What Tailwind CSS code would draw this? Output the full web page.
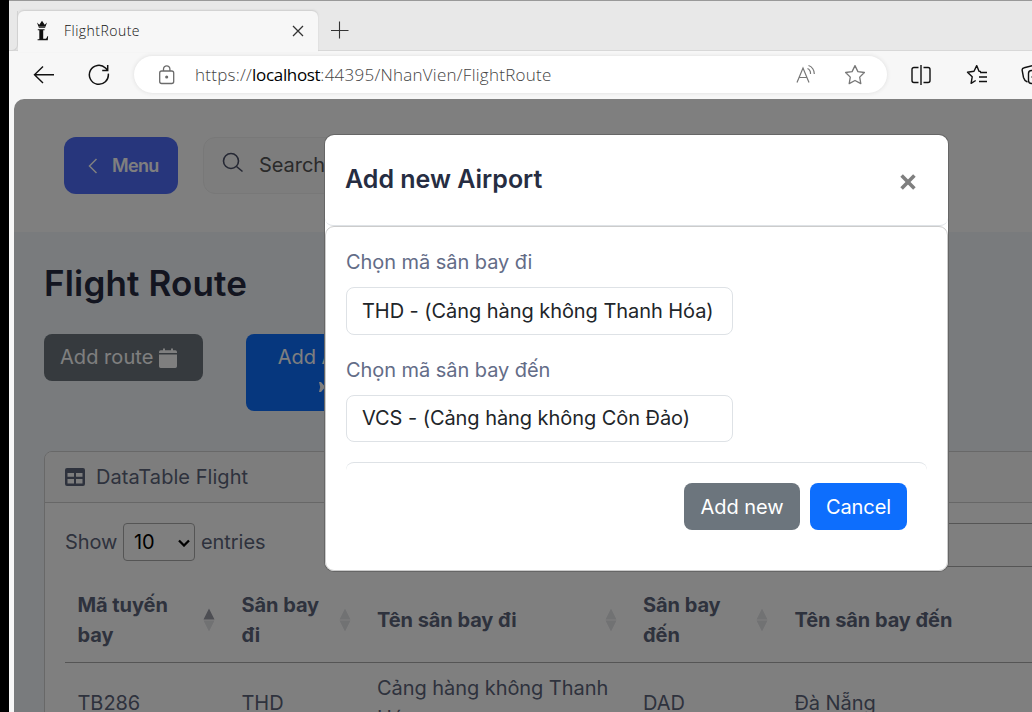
<!DOCTYPE html>
<html lang="vi">
<head>
<meta charset="utf-8">
<title>FlightRoute</title>
<script src="https://cdn.jsdelivr.net/npm/@tailwindcss/browser@4"></script>
</head>
<body class="w-[1032px] h-[712px] overflow-hidden bg-black pl-[9px] font-['Inter',sans-serif]">
<div class="relative flex h-[712px] w-[1023px] flex-col overflow-hidden bg-[#f7f7f7]">

  <!-- Tab strip -->
  <div class="flex h-[51px] shrink-0 border-t border-[#999] bg-[#e8e8e8] pt-[10px] font-['Open_Sans',sans-serif] shadow-[inset_0_-1px_0_#d8d8d8]">
    <div class="h-[40px] w-[9px] rounded-br-[6px] border-r border-b border-[#d3d3d3]"></div>
    <div class="flex h-[41px] w-[300px] items-center rounded-t-[6px] bg-[#f7f7f7] pb-[2px] shadow-[0_-1px_2px_#ccc]">
      <svg class="ml-[17px] h-[22px] w-[14px]" viewBox="0 0 14 22"><path d="M2 2.500l2.300 2.200L7 .8l2.700 3.900L12 2.500l-1.500 4.200H3.500z" fill="#111"/><path d="M3.800 7.300h6.400v.8H3.800zM2.800 9.200h6.800v1H8.200v8.600h1.500c1.600 0 2.200-1 2.600-2.600h.8l-.3 4H2.600v-1h1.700v-9H2.800z" fill="#111"/></svg>
      <span class="ml-[15px] text-[14px] leading-5 font-light tracking-[0.48px] text-[#111]">FlightRoute</span>
      <svg class="mr-[14px] ml-auto h-[12px] w-[12px]" viewBox="0 0 12 12"><path d="M1 1l10 10M11 1L1 11" stroke="#333" stroke-width="1.3"/></svg>
    </div>
    <svg class="mt-[10px] ml-[13px] h-[18px] w-[18px]" viewBox="0 0 18 18"><path d="M8.500 .5v17M0 9.500h17.500" stroke="#333" stroke-width="1.1"/></svg>
  </div>

  <!-- Toolbar -->
  <div class="flex h-[48px] shrink-0 items-center font-['Open_Sans',sans-serif]">
    <svg class="ml-[24px] h-[22px] w-[22px] shrink-0" viewBox="0 0 22 22" fill="none" stroke="#111" stroke-width="1.4"><path d="M10 2.500L1.500 10.700 10 19M1.500 10.700H21"/></svg>
    <svg class="ml-[33px] h-[22px] w-[22px] shrink-0" viewBox="0 0 22 22" fill="none" stroke="#111" stroke-width="1.500"><path d="M20.300 9.700A9.500 9.500 0 1 1 17.500 4L19.500 6M19.700 1v5.500h-5.500"/></svg>
    <div class="mb-px ml-[24px] flex h-[37px] w-[753px] shrink-0 items-center rounded-full bg-white shadow-[0_0_4px_#ddd]">
      <svg class="ml-[24px] h-[20px] w-[18px] shrink-0" viewBox="0 0 18 20" fill="none" stroke="#6b6b6b" stroke-width="1.300"><rect x="1.700" y="6" width="14" height="12.500" rx="2"/><path d="M5.500 6V4a3.200 3.200 0 0 1 6.400 0v2"/><circle cx="8.700" cy="12" r=".9" fill="#6b6b6b"/></svg>
      <span class="ml-[19px] w-[370px] shrink-0 text-[17px] leading-6 font-light tracking-[0.25px] whitespace-nowrap text-[#444]">https://<span class="font-normal tracking-[-0.33px] text-black">localhost</span>:44395/NhanVien/FlightRoute</span>
      <svg class="ml-[231px] h-[22px] w-[22px] shrink-0" viewBox="0 0 22 22" fill="none" stroke="#777" stroke-width="1.200"><path d="M1 18.500L7 4l6 14.500M3 13.500h8M11.500 4.500c2 1 3.200 3.200 3 5.500M12.500 1.500c3.500 1 6 4.800 5.800 8.500"/></svg>
      <svg class="ml-[26px] h-[22px] w-[22px] shrink-0" viewBox="0 0 22 22" fill="none" stroke="#777" stroke-width="1.300" stroke-linejoin="round"><path d="M11 1.600l2.900 6 6.500.9-4.700 4.600 1.100 6.500L11 16.500l-5.800 3.100 1.100-6.500L1.600 8.500l6.500-.9z"/></svg>
    </div>
    <svg class="ml-[23px] h-[22px] w-[22px] shrink-0" viewBox="0 0 22 22" fill="none" stroke="#111" stroke-width="1.400"><path d="M8.500 3.500H4a2 2 0 0 0-2 2v11a2 2 0 0 0 2 2h4.500M13.500 3.500H18a2 2 0 0 1 2 2v11a2 2 0 0 1-2 2h-4.500M11 1v20"/></svg>
    <svg class="ml-[34px] h-[22px] w-[22px] shrink-0" viewBox="0 0 22 22" fill="none" stroke="#111" stroke-width="1.400" stroke-linejoin="round"><path d="M15 7.600L13 7.300 10.700 1.600 8 7.200l-6.500 1 4.700 4.600-1.100 6.600 4.600-2.900M14 8.500H21M13 13h8M13 17.500h8"/></svg>
    <svg class="ml-[33px] h-[24px] w-[22px] shrink-0" viewBox="0 0 22 24" fill="none" stroke="#111" stroke-width="1.400"><path d="M6.500 19C4 18 3 16.500 2.500 14.500L1.200 7.500c-.3-1.500.5-2.500 2-2.800L14 2"/><rect x="7.500" y="7.500" width="14" height="13" rx="3"/><path d="M10.500 14h8"/></svg>
  </div>

  <!-- Page viewport -->
  <div class="relative ml-[5px] h-[613px] w-[1018px] shrink-0 overflow-hidden rounded-tl-[10px] bg-[#f2f6fa] text-[20px] leading-[30px] tracking-[-0.06px] text-[#5d657b]">
    <div class="flex h-[133px] gap-[25px] bg-white pt-[38px] pl-[50px]">
      <div class="flex h-[57px] w-[114px] shrink-0 items-center rounded-[12px] bg-[#4e6cf8] pl-[24px] font-semibold text-white">
        <svg class="h-[16px] w-[10px]" viewBox="0 0 10 16" fill="none" stroke="#fff" stroke-width="1.500"><path d="M8.500 1L1.500 8l7 7"/></svg>
        <span class="ml-[14px] text-[18px] tracking-[-0.65px]">Menu</span>
      </div>
      <div class="flex h-[57px] w-[400px] items-center rounded-[12px] border border-[#f0f0f0] bg-[#fafafa] pl-[18px]">
        <svg class="mb-[6px] h-[22px] w-[22px]" viewBox="0 0 22 22" fill="none" stroke="#4b5068" stroke-width="1.600"><circle cx="9" cy="9" r="7.500"/><path d="M14.500 14.500l6 5"/></svg>
        <span class="mb-[2px] ml-[15px] text-[#555]">Search...</span>
      </div>
    </div>
    <div class="pt-[30px] pl-[30px]">
      <h1 class="h-[72px] text-[35px] leading-[42px] font-semibold tracking-[0.16px] text-[#262b40]">Flight Route</h1>
      <div class="flex items-start">
        <div class="flex h-[47px] w-[159px] items-center rounded-[8px] bg-[#6c757d] pl-[16px] text-white"><span class="mb-[2px] tracking-[0.05px]">Add route</span>
          <svg class="ml-[6px] h-[20px] w-[18px]" viewBox="0 0 18 20" fill="#fff"><path d="M0 5V4q0-1.700 1.700-1.700H4V.5h2v1.800h6V.5h2v1.800h2.300Q18 2.300 18 4v1zM0 6.500h18v11.800Q18 20 16.300 20H1.700Q0 20 0 18.300z"/></svg>
        </div>
        <div class="ml-[43px] flex h-[77px] w-[172px] flex-col items-center rounded-[8px] bg-[#0d6efd] pt-[8px] text-white">
          <span>Add Airport</span>
          <svg class="mt-[5px] mr-[3px] h-[20px] w-[24px]" viewBox="0 0 24 20" fill="#fff"><path d="M0 5h2l3 3.500h5L7 .5h3L15 8.500h6q3 1.500 0 3h-6L10 19.500H7l3-8H5L2 15H0l1.200-5z"/></svg>
        </div>
      </div>
      <div class="mt-[40px] h-[300px] w-[1200px] overflow-hidden rounded-tl-[8px] border border-[#d0d0d0] bg-white">
        <div class="flex h-[51px] items-center border-b border-[#cfcfcf] bg-[#fafafa] pl-[20px]">
          <svg class="h-[18px] w-[20px]" viewBox="0 0 20 18"><path fill="#5d657b" fill-rule="evenodd" d="M2 0h16q2 0 2 2v14q0 2-2 2H2q-2 0-2-2V2q0-2 2-2zm.5 5v3.700H9V5zm8.500 0v3.700h6.500V5zM2.500 11v4.500H9V11zm8.500 0v4.500h6.500V11z"/></svg>
          <span class="ml-[11px] tracking-[0.05px]">DataTable Flight</span>
        </div>
        <div class="flex h-[64px] pt-[20px] pl-[20px]">
          <span class="w-[58px] pt-[4px]">Show</span>
          <div class="flex h-[38px] w-[72px] items-center justify-between rounded-[4px] border border-[#aaa] pr-[4px] pl-[10px] text-black">10
            <svg class="mt-px h-[8px] w-[12px]" viewBox="0 0 12 8" fill="none" stroke="#000" stroke-width="2.300"><path d="M1 1.500l5 5 5-5"/></svg>
          </div>
          <span class="ml-[6px] pt-[4px]">entries</span>
          <div class="ml-[600px] h-[44px] w-[240px] rounded-[4px] border border-[#aaa]"></div>
        </div>
        <div class="ml-[20px] grid h-[96px] w-[1150px] grid-cols-[164px_135.500px_266px_151.500px_1fr] items-center border-b border-[#aaa] pt-[20px] pb-[10px] font-bold [&>div]:flex [&>div]:items-center [&>div]:justify-between [&>div]:pr-[14px] [&>div]:pl-[12.500px]">
          <div><span>Mã tuyến<br>bay</span><svg class="h-[24px] w-[12px]" viewBox="0 0 12 24"><path fill="#9a9ca6" d="M6 .5l5.500 11H.5z"/><path fill="#e3e4e7" d="M6 23.500l5.500-11H.5z"/></svg></div>
          <div><span>Sân bay<br>đi</span><svg class="h-[24px] w-[12px]" viewBox="0 0 12 24"><path fill="#e3e4e7" d="M6 .5l5.500 11H.5zM6 23.500l5.500-11H.5z"/></svg></div>
          <div><span>Tên sân bay đi</span><svg class="h-[24px] w-[12px]" viewBox="0 0 12 24"><path fill="#e3e4e7" d="M6 .5l5.500 11H.5zM6 23.500l5.500-11H.5z"/></svg></div>
          <div><span>Sân bay<br>đến</span><svg class="h-[24px] w-[12px]" viewBox="0 0 12 24"><path fill="#e3e4e7" d="M6 .5l5.500 11H.5zM6 23.500l5.500-11H.5z"/></svg></div>
          <div>Tên sân bay đến</div>
        </div>
        <div class="ml-[20px] grid h-[80px] w-[1150px] grid-cols-[164px_135.500px_266px_151.500px_1fr] items-center [&>div]:pr-[13px] [&>div]:pl-[12.500px]">
          <div>TB286</div><div>THD</div><div>Cảng hàng không Thanh Hóa</div><div>DAD</div><div>Đà Nẵng</div>
        </div>
      </div>
    </div>

    <!-- Backdrop and dialog -->
    <div class="absolute inset-0 bg-black/50"></div>
    <div class="absolute top-[36px] left-[311px] flex h-[436px] w-[623px] flex-col rounded-[9px] bg-white shadow-[0_0_0_1px_#666]">
      <div class="flex h-[91px] shrink-0 justify-between rounded-[8px] border-b border-[#dee2e6] pr-[32px] pl-[20px]">
        <h2 class="mt-[29px] text-[25px] font-semibold tracking-[0px] text-[#262d42]">Add new Airport</h2>
        <svg class="mt-[39px] h-[16px] w-[16px]" viewBox="0 0 16 16" stroke="#7f7f7f" stroke-width="3.600"><path d="M1.600 1.600l12.800 12.800M14.400 1.600L1.600 14.400"/></svg>
      </div>
      <div class="flex flex-1 flex-col rounded-[9px] border border-[#ccc] px-[20px] pt-[20px]">
        <label class="text-[#636c87]">Chọn mã sân bay đi</label>
        <div class="mt-[10px] flex h-[48px] w-[387px] items-center rounded-[8px] border border-[#dee2e6] pl-[15px] text-[#212529]">THD - (Cảng hàng không Thanh Hóa)</div>
        <label class="mt-[20px] text-[#636c87]">Chọn mã sân bay đến</label>
        <div class="mt-[10px] flex h-[47px] w-[387px] items-center rounded-[8px] border border-[#dee2e6] pb-px pl-[15px] text-[#212529]">VCS - (Cảng hàng không Côn Đảo)</div>
        <div class="mt-[20px] flex justify-end gap-[10px] rounded-[8px] border-t border-[#dee2e6] pt-[20px] pr-[20px] text-white">
          <div class="flex h-[47px] w-[116px] items-center justify-center rounded-[8px] bg-[#6c757d]">Add new</div>
          <div class="flex h-[47px] w-[97px] items-center justify-center rounded-[8px] bg-[#0d6efd]">Cancel</div>
        </div>
      </div>
    </div>
  </div>
</div>
</body>
</html>
